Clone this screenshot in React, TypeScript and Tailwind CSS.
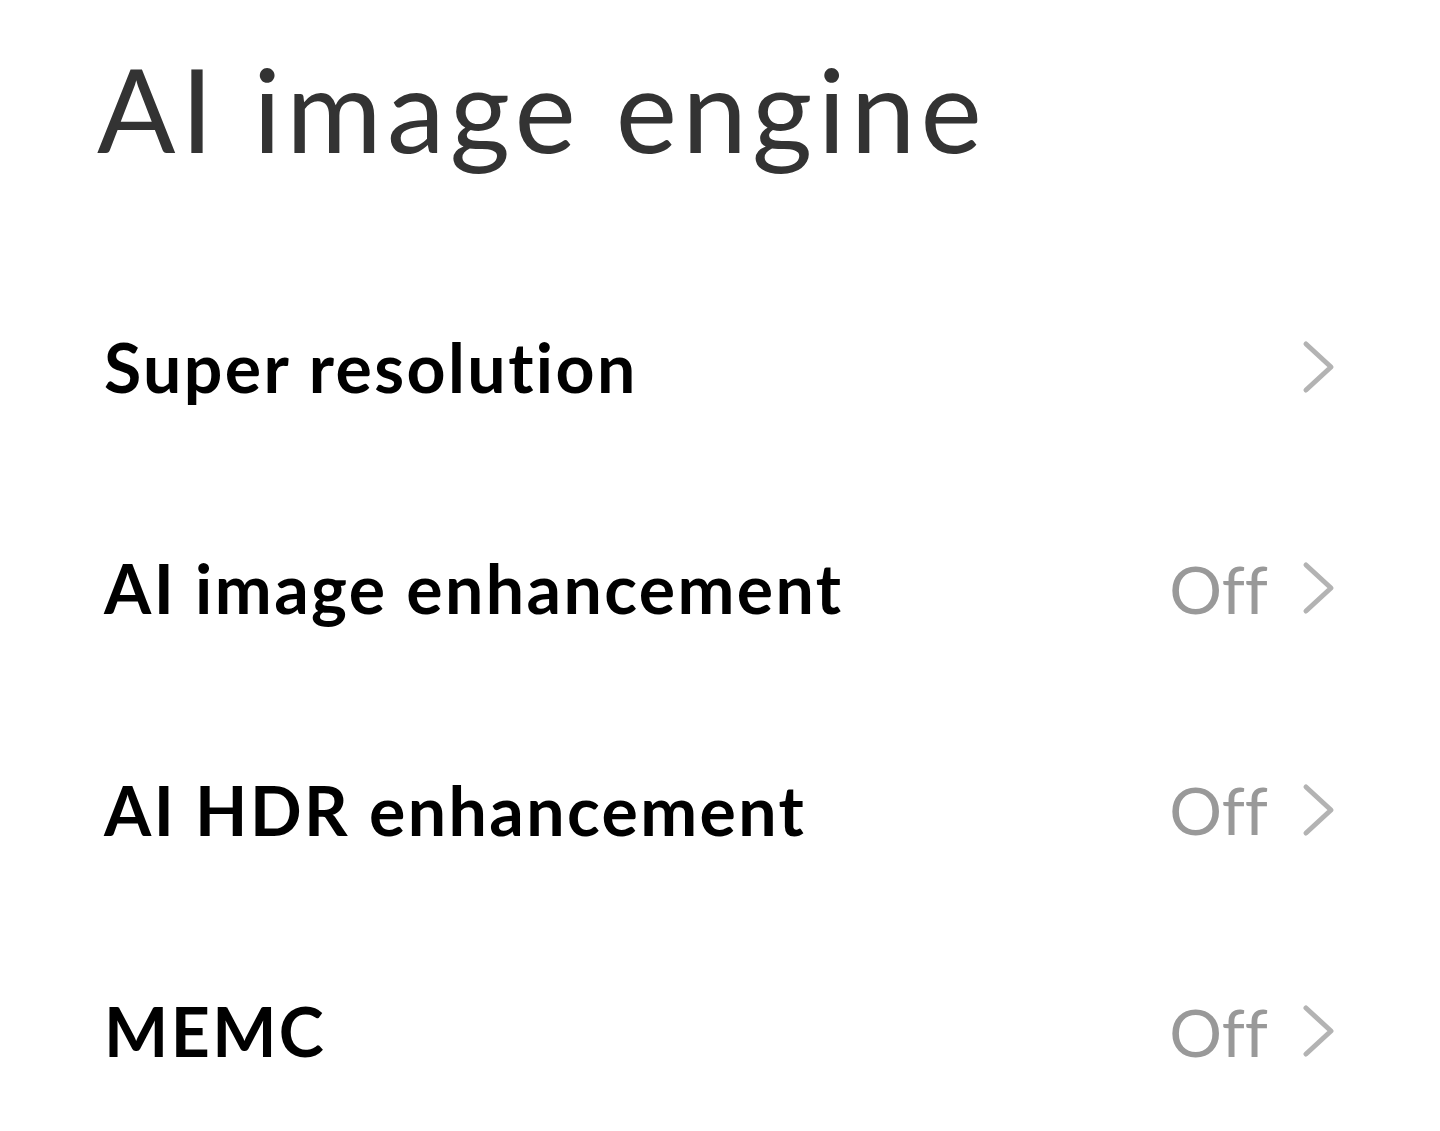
import React from "react";

const rows = [
  { label: "Super resolution", value: "" },
  { label: "AI image enhancement", value: "Off" },
  { label: "AI HDR enhancement", value: "Off" },
  { label: "MEMC", value: "Off" },
];

const Chevron = () => (
  <svg width="34" height="54" viewBox="0 0 34 54" fill="none" className="shrink-0">
    <path d="M4 4 L29 27 L4 50" stroke="#b3b3b3" strokeWidth="5" strokeLinecap="round" strokeLinejoin="round" />
  </svg>
);

export default function App() {
  return (
    <div className="w-[1440px] h-[1131px] bg-white overflow-hidden font-['Lato',sans-serif] [font-variant-ligatures:none]">
      {/* header */}
      <div className="h-[256px] pl-[97px] pt-[41px]">
        <h1 className="text-[116px] leading-[136px] font-normal tracking-[5.2px] text-[#333333]">AI image engine</h1>
      </div>

      {/* rows */}
      <div className="flex flex-col">
        {rows.map((r) => (
          <div key={r.label} className="h-[221.5px] flex items-center justify-between pl-[104px] pr-[104px]">
            <span className="text-[68px] font-bold tracking-[2.4px] text-black">{r.label}</span>
            <div className="flex items-center gap-[34px]">
              {r.value && <span className="text-[66px] text-[#999999]">{r.value}</span>}
              <Chevron />
            </div>
          </div>
        ))}
      </div>
    </div>
  );
}
